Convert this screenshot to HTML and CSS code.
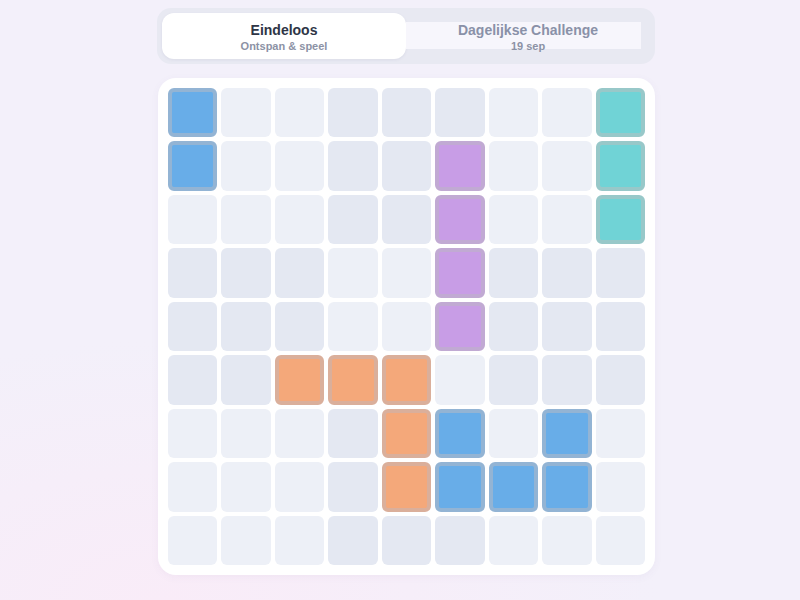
FILE: index.html
```html
<!DOCTYPE html>
<html lang="nl">
<head>
<meta charset="utf-8">
<title>Blokken</title>
<link rel="stylesheet" href="styles.css">
</head>
<body>
<div class="app">
  <div class="tabs">
    <div class="tab active">
      <div class="tab-title">Eindeloos</div>
      <div class="tab-sub">Ontspan &amp; speel</div>
    </div>
    <div class="tab">
      <div class="tab-title">Dagelijkse Challenge</div>
      <div class="tab-sub">19 sep</div>
    </div>
  </div>
  <div class="board">
    <div class="cell blue"></div><div class="cell l"></div><div class="cell l"></div><div class="cell d"></div><div class="cell d"></div><div class="cell d"></div><div class="cell l"></div><div class="cell l"></div><div class="cell teal"></div>
    <div class="cell blue"></div><div class="cell l"></div><div class="cell l"></div><div class="cell d"></div><div class="cell d"></div><div class="cell purple"></div><div class="cell l"></div><div class="cell l"></div><div class="cell teal"></div>
    <div class="cell l"></div><div class="cell l"></div><div class="cell l"></div><div class="cell d"></div><div class="cell d"></div><div class="cell purple"></div><div class="cell l"></div><div class="cell l"></div><div class="cell teal"></div>
    <div class="cell d"></div><div class="cell d"></div><div class="cell d"></div><div class="cell l"></div><div class="cell l"></div><div class="cell purple"></div><div class="cell d"></div><div class="cell d"></div><div class="cell d"></div>
    <div class="cell d"></div><div class="cell d"></div><div class="cell d"></div><div class="cell l"></div><div class="cell l"></div><div class="cell purple"></div><div class="cell d"></div><div class="cell d"></div><div class="cell d"></div>
    <div class="cell d"></div><div class="cell d"></div><div class="cell orange"></div><div class="cell orange"></div><div class="cell orange"></div><div class="cell l"></div><div class="cell d"></div><div class="cell d"></div><div class="cell d"></div>
    <div class="cell l"></div><div class="cell l"></div><div class="cell l"></div><div class="cell d"></div><div class="cell orange"></div><div class="cell blue"></div><div class="cell l"></div><div class="cell blue"></div><div class="cell l"></div>
    <div class="cell l"></div><div class="cell l"></div><div class="cell l"></div><div class="cell d"></div><div class="cell orange"></div><div class="cell blue"></div><div class="cell blue"></div><div class="cell blue"></div><div class="cell l"></div>
    <div class="cell l"></div><div class="cell l"></div><div class="cell l"></div><div class="cell d"></div><div class="cell d"></div><div class="cell d"></div><div class="cell l"></div><div class="cell l"></div><div class="cell l"></div>
  </div>
</div>
</body>
</html>
```
FILE: styles.css
```css
html, body {
  margin: 0;
  padding: 0;
  height: 100%;
}
body {
  font-family: "Liberation Sans", Arial, sans-serif;
  background:
    radial-gradient(ellipse 500px 260px at 20% 100%, #f9ecf8 0%, rgba(249,236,248,0) 100%),
    #f3f0fa;
  overflow: hidden;
}
.app {
  width: 498px;
  margin: 8px 0 0 157px;
}
.tabs {
  display: grid;
  grid-template-columns: 244px 244px;
  height: 46px;
  padding: 5px;
  background: #e8e9f2;
  border-radius: 14px;
}
.tab {
  height: 46px;
  display: flex;
  flex-direction: column;
  align-items: center;
  justify-content: center;
  text-align: center;
  box-sizing: border-box;
  padding-top: 3px;
}
.tab.active {
  background: #ffffff;
  border-radius: 12px;
  box-shadow: 0 1px 3px rgba(60, 70, 110, 0.08);
}
.tab:not(.active) {
  background: linear-gradient(#f7f6fc, #f7f6fc) no-repeat 0 9px / 235px 27px;
}
.tab-title {
  font-size: 14px;
  font-weight: 700;
  line-height: 17px;
  color: #2e3546;
}
.tab-sub {
  margin-top: 1px;
  font-size: 11px;
  font-weight: 700;
  line-height: 13px;
  color: #8c92a5;
}
.tab:not(.active) .tab-title {
  color: #8a91a8;
}
.board {
  width: 477px;
  height: 477px;
  margin: 14px 0 0 1px;
  padding: 10px;
  background: #ffffff;
  border-radius: 18px;
  box-shadow: 0 2px 8px rgba(90, 80, 140, 0.05);
  display: grid;
  grid-template-columns: repeat(9, 1fr);
  grid-template-rows: repeat(9, 1fr);
  gap: 4px;
}
.cell {
  border-radius: 6px;
  box-sizing: border-box;
}
.cell.l { background: #edf0f7; }
.cell.d { background: #e4e8f2; }
.cell.blue { background: #68ade8; border: 4px solid #93b4d4; }
.cell.teal { background: #70d3d6; border: 4px solid #98c8c9; }
.cell.purple { background: #c89de6; border: 4px solid #c1aad3; }
.cell.orange { background: #f4a87a; border: 4px solid #daaf9b; }
```
